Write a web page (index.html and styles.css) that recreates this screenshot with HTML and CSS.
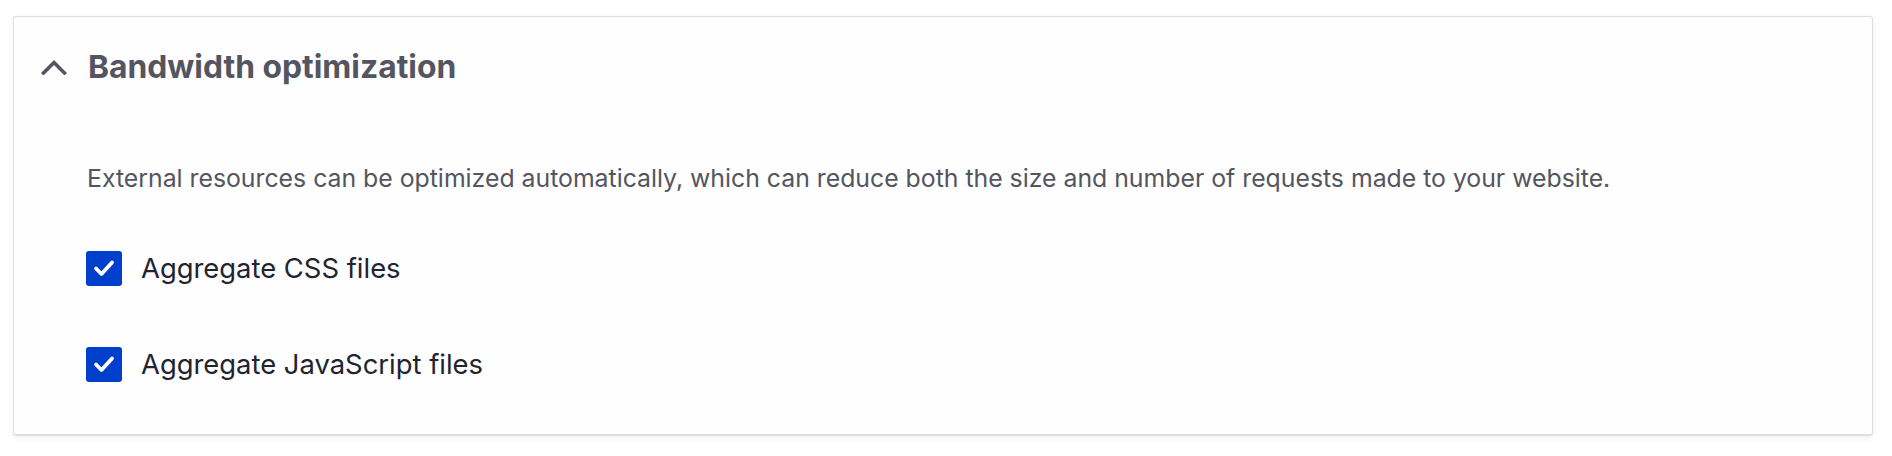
FILE: index.html
```html
<!DOCTYPE html>
<html lang="en">
<head>
<meta charset="utf-8">
<title>Bandwidth optimization</title>
<link rel="stylesheet" href="styles.css">
</head>
<body>
<details class="details" open>
  <summary class="details-summary">
    <svg class="chevron" width="26" height="16" viewBox="0 0 26 16" aria-hidden="true">
      <polyline points="2.5,14 13,3.5 23.5,14" fill="none" stroke="#545560" stroke-width="3.6" stroke-linecap="square" stroke-linejoin="miter"/>
    </svg>
    <span class="summary-text">Bandwidth optimization</span>
  </summary>
  <div class="details-content">
    <p class="description">External resources can be optimized automatically, which can reduce both the size and number of requests made to your website.</p>
    <div class="form-item">
      <span class="checkbox">
        <svg width="22" height="18" viewBox="0 0 22 18" aria-hidden="true"><polyline points="3,9.5 8.5,15 19,3.5" fill="none" stroke="#fff" stroke-width="3.8" stroke-linecap="round" stroke-linejoin="round"/></svg>
      </span>
      <label class="label">Aggregate CSS files</label>
    </div>
    <div class="form-item">
      <span class="checkbox">
        <svg width="22" height="18" viewBox="0 0 22 18" aria-hidden="true"><polyline points="3,9.5 8.5,15 19,3.5" fill="none" stroke="#fff" stroke-width="3.8" stroke-linecap="round" stroke-linejoin="round"/></svg>
      </span>
      <label class="label">Aggregate JavaScript files</label>
    </div>
  </div>
</details>
</body>
</html>
```

FILE: styles.css
```css
html, body {
  margin: 0;
  padding: 0;
  background: #ffffff;
}

body {
  font-family: Inter, "Liberation Sans", sans-serif;
  padding: 16px 19px 20px 13px;
}

.details {
  display: block;
  border: 1px solid #dedee4;
  border-bottom-width: 2px;
  border-radius: 3px;
  box-shadow: 0 2px 6px rgba(0, 0, 0, 0.06);
  background: #fefefe;
  height: 417px;
  box-sizing: content-box;
}

.details-summary {
  list-style: none;
  display: flex;
  align-items: center;
  padding: 26px 0 26px 27px;
  height: 48px;
  gap: 21px;
  cursor: pointer;
}

.details-summary::-webkit-details-marker {
  display: none;
}

.chevron {
  display: block;
  flex: none;
}

.summary-text {
  font-size: 31.8px;
  font-weight: 700;
  line-height: 48px;
  color: #545560;
}

.details-content {
  padding: 43px 0 0 73px;
}

.description {
  margin: 0;
  font-size: 24.8px;
  line-height: 36px;
  color: #545560;
}

.form-item {
  display: flex;
  align-items: center;
  gap: 19px;
  height: 36px;
  margin-top: 54px;
  margin-left: -1px;
}

.form-item + .form-item {
  margin-top: 60px;
}

.checkbox {
  width: 36px;
  height: 35px;
  border-radius: 3px;
  background: #003ecc;
  display: flex;
  align-items: center;
  justify-content: center;
  flex: none;
}

.checkbox svg {
  display: block;
}

.label {
  font-size: 27.4px;
  line-height: 36px;
  color: #222330;
}
```
